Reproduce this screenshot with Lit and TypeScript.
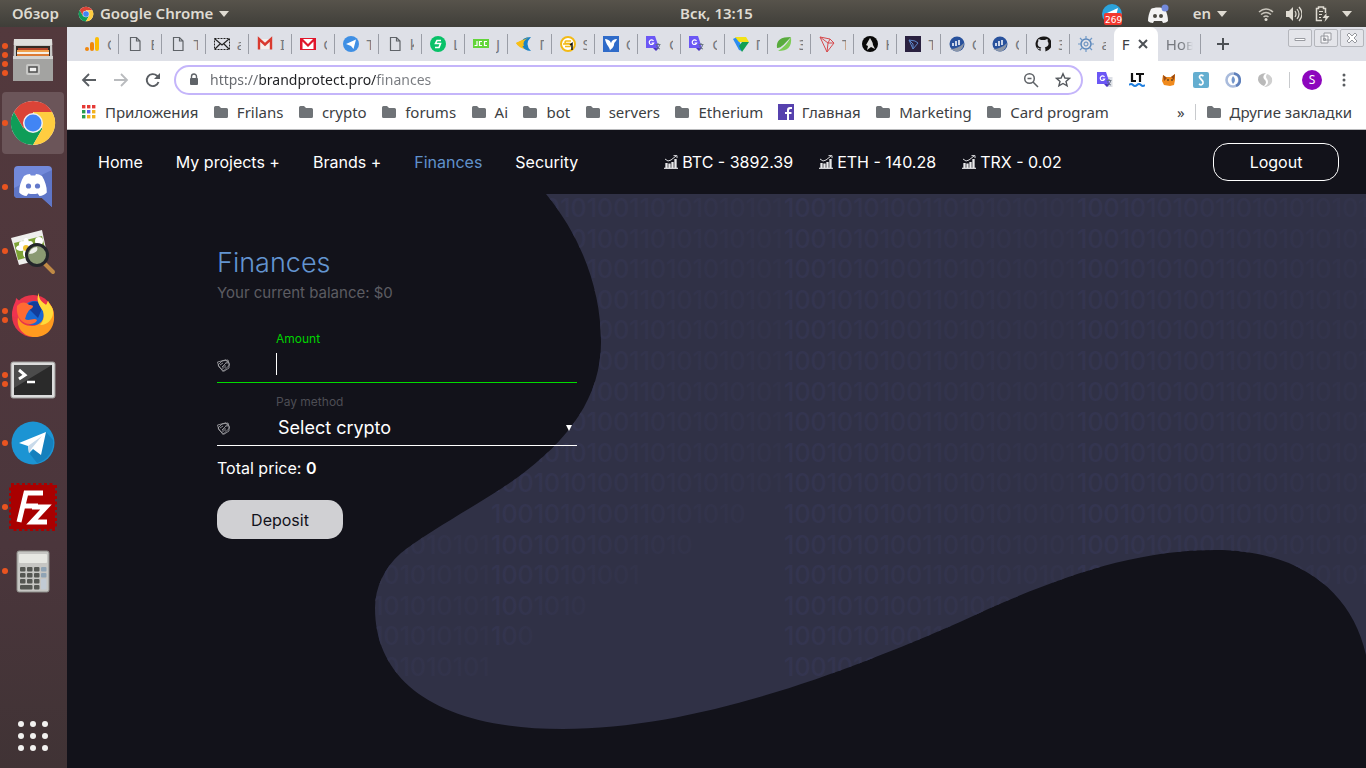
import { LitElement, html, svg, css } from "lit";
import { customElement, state } from "lit/decorators.js";
import { classMap } from "lit/directives/class-map.js";

type Glyph = unknown;

const chrome = svg`
  <circle cx="24" cy="24" r="22" fill="#fff"/>
  <path d="M24 24 4.9 13A22 22 0 0 1 43.1 13H24z" fill="#db4437"/>
  <path d="M4.9 13 14.5 29.5 24 24V13z" fill="#db4437"/>
  <path d="M24 24 14.5 29.5 4.9 13A22 22 0 0 0 24 46L33.5 29.5z" fill="#0f9d58"/>
  <path d="M43.1 13H24L33.5 29.5 24 46A22 22 0 0 0 43.1 13z" fill="#ffcd40"/>
  <circle cx="24" cy="24" r="10" fill="#f1f1f1"/>
  <circle cx="24" cy="24" r="8.500" fill="#4285f4"/>`;

const plane = svg`<path d="M10 24 37 13 32 36 24 30 20 34 19 27z" fill="#fff"/><path d="M19 27 33 17 23 29 20 34z" fill="#c8daea"/>`;

const discordFace = svg`<path d="M15 13c2-1.3 4-1.8 6-2l.8 1.4h4.4L27 11c2 .2 4 .7 6 2 3 5 5 10.500 4.800 16.500-2 2.200-4.600 3.300-7.300 3.500l-1.800-2.600c-3 .8-6.400.8-9.400 0L17.500 33c-2.700-.2-5.300-1.300-7.300-3.500C10 23.500 12 18 15 13z" fill="#fff"/>`;

const files = svg`
  <path d="M5 4h38l1 40H4z" fill="#c9c9c7"/><path d="M5 4h38l.3 6H4.700z" fill="#dededc"/>
  <path d="M7 11h34v13H7z" fill="#332a24"/><path d="M9 13h30v3H9z" fill="#b3442a"/>
  <path d="M8 15h32v3H8z" fill="#f0a04b"/><path d="M8 17h32v2H8z" fill="#f6efe4"/><path d="M8 19h32v2H8z" fill="#dc7a33"/>
  <path d="M4 21h40v25H4z" fill="#a3a3a1"/><path d="M4 21h40v3H4z" fill="#d4d4d2"/>
  <rect x="17" y="29" width="14" height="11" rx="2" fill="#c8c8c6"/><rect x="20" y="32" width="8" height="5" fill="#f1f1f0" stroke="#4c4c4c" stroke-width="1.500"/>`;

const imageViewer = svg`
  <path d="M2 11 33 3 39 31 10 38z" fill="#eeeeec"/><path d="M5 16 33 9 37 25 9 33z" fill="#7da336"/>
  <g fill="#fff"><ellipse cx="17" cy="16" rx="3" ry="5"/><ellipse cx="17" cy="26" rx="3" ry="5"/><ellipse cx="12" cy="21" rx="5" ry="3"/><ellipse cx="22" cy="21" rx="5" ry="3"/><circle cx="13" cy="17" r="3"/><circle cx="21" cy="17" r="3"/><circle cx="30" cy="14" r="4"/></g>
  <circle cx="17" cy="21" r="3" fill="#f0c330"/>
  <path d="M36 37 44 45" stroke="#c08a45" stroke-width="4" stroke-linecap="round"/>
  <circle cx="28" cy="28" r="10.500" fill="#8a9a72" stroke="#23262b" stroke-width="3"/>
  <path d="M20 27a8 8 0 0 1 8-7c2 4-3 7-8 7z" fill="#eef0ea"/>`;

const firefox = svg`
  <circle cx="24" cy="25" r="21" fill="#e8354a"/>
  <path d="M7 6c0 5 3 7 3 7L4 30l4-14z" fill="#f0334f"/><path d="M3 25C3 14 7 12 7 7c4 4 8 5 10 5h12v20z" fill="#ee3350"/>
  <circle cx="25" cy="22" r="12" fill="#1767d2"/><path d="M17 15c5-6 13-6 17 0l-5 12z" fill="#123d9b"/>
  <path d="M30 2c-4 8 2 14 4 18 3 8-3 15-11 15-7 0-12-3-14-9-2 10 5 20 17 20 13 0 20-10 19-22 0-7-4-10-6-14-1 2-1 3-2 4-4-3-8-6-7-12z" fill="#ff9a1f"/>
  <path d="M30 2c-4 8 2 14 4 18 2 6 0 11-3 14 9 0 14-8 13-14 0-4-4-7-5-10-1 2-1 3-2 4-4-3-8-6-7-12z" fill="#ffdb3a"/>
  <path d="M8 15c4-5 10-4 12-1 2 0 3 0 4 1 0 3-4 3-5 6-2 2-2 5-3 7 4 3 9-2 12 1-1 4-8 5-12 3-6-3-9-9-8-17z" fill="#ff6b32"/>`;

const terminal = svg`
  <rect x="2" y="7" width="44" height="36" rx="2" fill="#dcdcdc" stroke="#9a9a98"/>
  <rect x="5" y="10" width="38" height="30" fill="#2a2a2a"/><path d="M5 10h38L5 33z" fill="#4b4b4b"/>
  <path d="m10 15 6 5-6 4" stroke="#fff" stroke-width="3" fill="none"/><path d="M18 27h8" stroke="#fff" stroke-width="2.500"/>`;

const telegram = svg`<circle cx="24" cy="24" r="21.500" fill="#1c94d3"/><path d="M37 13 44 21A21 21 0 0 1 28 44L21 35z" fill="#1580bd"/>${plane}`;

const filezilla = svg`
  <rect x="2" y="2" width="44" height="44" fill="#a90000" stroke="#a90000" stroke-width="4" stroke-dasharray="3 2.500"/>
  <g fill="none" stroke="#fff" stroke-width="5"><path d="M10 39 17 10h17M14 23h15"/><path d="M23 24h14L23 39h15"/></g>`;

const calculator = svg`
  <rect x="8" y="4" width="32" height="41" rx="2" fill="#c6c6c3" stroke="#8c8c88"/>
  <rect x="10" y="7" width="28" height="9" rx="1" fill="#e6e7e2"/>
  ${[0, 1, 2].map((r) => [0, 1, 2].map((c) => svg`<rect x=${11 + c * 7} y=${20 + r * 6} width="5.500" height="4.500" rx="1" fill="#555753"/>`))}
  <rect x="11" y="38" width="12.500" height="4.500" rx="1" fill="#555753"/><rect x="25" y="38" width="5.500" height="4.500" rx="1" fill="#555753"/>
  <rect x="32" y="20" width="5.500" height="4.500" rx="1" fill="#8fa3b4"/><rect x="32" y="26" width="5.500" height="4.500" rx="1" fill="#8fa3b4"/><rect x="32" y="32" width="5.500" height="10.500" rx="1" fill="#c1cad4"/>`;

const discord = svg`<path d="M9 3h30q4 0 4 4v37l-10-9H9q-4 0-4-4V7q0-4 4-4z" fill="#7289da"/><path d="M5 25 43 7v37l-10-9H9q-4 0-4-4z" fill="#5f76c7"/>${discordFace}<circle cx="19.500" cy="23" r="2.600" fill="#6379cb"/><circle cx="28.500" cy="23" r="2.600" fill="#6379cb"/>`;

const dock: { name: string; art: Glyph; windows: number; active?: boolean }[] = [
  { name: "Files", art: files, windows: 4 },
  { name: "Google Chrome", art: chrome, windows: 1, active: true },
  { name: "Discord", art: discord, windows: 1 },
  { name: "Image Viewer", art: imageViewer, windows: 1 },
  { name: "Firefox", art: firefox, windows: 2 },
  { name: "Terminal", art: terminal, windows: 2 },
  { name: "Telegram", art: telegram, windows: 1 },
  { name: "FileZilla", art: filezilla, windows: 1 },
  { name: "Calculator", art: calculator, windows: 1 },
];

/* Favicons, all on a 16 x 16 grid */
const pageIcon = svg`<path d="M3.500 1.500h6l3.500 3.500v9.500h-9.500zM9.500 1.500V5H13" fill="none" stroke="#5f6368" stroke-width="1.200"/>`;
const analytics = svg`<rect x="11" y="1" width="4" height="14" rx="2" fill="#fbbc04"/><rect x="6" y="6" width="4" height="9" rx="2" fill="#f0860b"/><circle cx="3" cy="13" r="2" fill="#f0860b"/>`;
const envelope = svg`<path d="M.5 2.500h15v11H.500z" fill="none" stroke="#222" stroke-dasharray="2 1"/><path d="m1 3 7 6 7-6M1 13l5-5M15 13l-5-5" fill="none" stroke="#222" stroke-width="1.200"/>`;
const gmail = svg`<path d="M2 3h12v10H2z" fill="#f3f0ee"/><path d="M2 13.500V3l6 5.500L14 3v10.500" fill="none" stroke="#d93a2f" stroke-width="2.400"/>`;
const gmailRed = svg`<path d="M0 2h16v12H0z" fill="#e0162b"/><path d="m3 3 5 5 5-5zM2.500 13V5.500L8 11l5.500-5.500V13z" fill="#fff"/>`;
const tgBlue = svg`<circle cx="8" cy="8" r="8" fill="#3f8fe4"/><path d="m3 8 10-4.500L10.500 13 8 10z" fill="#fff"/>`;
const greenRound = svg`<circle cx="8" cy="8" r="8" fill="#08c168"/><path d="M11 4.500H7L5.500 7.500h5L9 11.500H5" fill="none" stroke="#fff" stroke-width="1.600"/>`;
const jcc = svg`<path d="M0 3h16v9H0z" fill="#62d53a"/><path d="M4 5v4.500H1.500M9 5.500H6.500v4H9M14 5.500h-2.500v4H14" fill="none" stroke="#fff" stroke-width="1.200"/>`;
const moon = svg`<path d="M0 7 12 1Q5 8 12 14 2 12 0 7z" fill="#f8bf16"/><path d="M15 1Q5 1 6 8t9 7Q8 8 15 1z" fill="#1b83c6"/><path d="M0 7 12 2Q6 5 8 10 2 10 0 7z" fill="#f8bf16"/>`;
const coin = svg`<circle cx="8" cy="8" r="7" fill="#fff" stroke="#f3ba16" stroke-width="2"/><path d="M11 5H6q-2 1 0 2.500h4q2 1.500 0 3H5M3 8h9" fill="none" stroke="#f3ba16" stroke-width="1.500"/><path d="m10 9 2-1.500V14" fill="none" stroke="#111" stroke-width="1.500"/>`;
const bird = svg`<path d="M0 0h16v16H0z" fill="#2f6bc9"/><path d="M2 3c2 0 5 1 6 4 1-3 3-4 6-4-1 3-3 3-3 6-1 4-4 4-4 6 0-4-4-6-5-12z" fill="#fff"/>`;
const translate = svg`<path d="M6 5h9.500v10H9z" fill="#dde0e6"/><path d="M0 0h9l4 12H0z" fill="#6b57f5"/><path d="m7 12h6l-3 3z" fill="#4a30c8"/><path d="M7.500 5a2.300 2.300 0 1 0 .2 2H5.500" fill="none" stroke="#fff" stroke-width="1.200"/><path d="M9.500 8.500h5M12 7v1.500M13.500 9c0 2-2 3.500-3.500 4M10.500 9.500c.5 2 2 3 3.500 3.500" fill="none" stroke="#5f6b7a" stroke-width=".9"/>`;
const triangles = svg`<path d="M0 3 4 1 8 9 9 15 6 14z" fill="#2c8df0"/><path d="M2 1h11l3 5H6z" fill="#f2e217"/><path d="m9 6 7 0-7 10-3-6z" fill="#13a052"/>`;
const leaf = svg`<path d="M15 1C5 1 0 4 1 12 6 12 9 7 15 1z" fill="#58ab3d"/><path d="M15 1c1 10-3 14-13 14 5-3 9-7 13-14z" fill="#7dcc56"/>`;
const tron = svg`<path d="m1 1 10 2 4 4-7 9zM1 1l8 6-1 9M9 7l2-4M9 7h6" fill="none" stroke="#d6494c" stroke-width="1"/>`;
const horse = svg`<circle cx="8" cy="8" r="8" fill="#090909"/><path d="M8 2c1 2 3 4 3 7l2 4-4-2-4 3 1-4-2-1z" fill="#dedede"/>`;
const tronDark = svg`<path d="M0 0h16v16H0z" fill="#2a2140"/><path d="m4 4 6 1 3 2-5 6zM4 4l4 4v5" fill="none" stroke="#5d86c9"/>`;
const globe = svg`<circle cx="8" cy="8" r="7.500" fill="#28519c"/><path d="M4 10V7M7 10V5M10 9V4" stroke="#fff" stroke-width="1.500"/><path d="M1 13c5 0 10-2 14-6-1 6-4 9-8 8.500z" fill="#8b96a8"/>`;
const github = svg`<path d="M8 .5a7.500 7.500 0 0 0-2.400 14.600v-2c-3 .6-3-1.500-3.300-1.700 2 0 1.500 1.600 3.500 1.200 0-.6.300-1 .5-1.200-3-.3-4-2-3.500-5 .1-.6.500-1 .6-1.200-.3-1 0-2 .2-2.200 1 0 2 .8 2.300 1h4.200c.3-.2 1.300-1 2.300-1 .2.200.5 1.200.2 2.200 1.600 2 1.400 5.500-2.800 6.200.4.400.6 1 .6 2v2A7.500 7.500 0 0 0 8 .5z" fill="#191717"/>`;
const cog = svg`<circle cx="8" cy="8" r="5" fill="none" stroke="#5c87bb" stroke-width="1.500"/><circle cx="8" cy="8" r="2" fill="none" stroke="#5c87bb"/><path d="M8 3V0M8 13v3M3 8H0M13 8h3M4.500 4.500 2 2M11.500 4.500 14 2M4.500 11.500 2 14M11.500 11.500 14 14" stroke="#7099c8" stroke-width="1.200"/>`;

const tabs: [Glyph, string][] = [
  [analytics, "O"], [pageIcon, "B"], [pageIcon, "T"], [envelope, "a"], [gmail, "I"], [gmailRed, "G"],
  [tgBlue, "T"], [pageIcon, "k"], [greenRound, "L"], [jcc, "J"], [moon, "Г"], [coin, "S"],
  [bird, "O"], [translate, "G"], [translate, "G"], [triangles, "П"], [leaf, "З"], [tron, "T"],
  [horse, "К"], [tronDark, "T"], [globe, "O"], [globe, "O"], [github, "З"], [cog, "a"],
];

const folder = svg`<path d="M1 3.500Q1 2 2.500 2H6l2 2h5.500Q15 4 15 5.500v7q0 1.500-1.500 1.500h-11Q1 14 1 12.500z" fill="#6f7377"/>`;
const facebook = svg`<path d="M0 0h16v16H0z" fill="#5641ae"/><path d="M9 16v-6H7V8h2V6q0-3 3-3h2v2h-1.500Q11 5 11 6.500V8h2.500v2H11v6z" fill="#fff"/>`;
const appsGrid = svg`${["#e53935", "#e53935", "#e53935", "#2a9d4f", "#5a5cf0", "#f2b21d", "#2a9d4f", "#f2b21d", "#f2b21d"].map(
  (c, i) => svg`<rect x=${1 + (i % 3) * 5} y=${1 + Math.floor(i / 3) * 5} width="3.400" height="3.400" fill=${c}/>`
)}`;

const bookmarks: [Glyph, string][] = [
  [appsGrid, "Приложения"], [folder, "Frilans"], [folder, "crypto"], [folder, "forums"], [folder, "Ai"], [folder, "bot"],
  [folder, "servers"], [folder, "Etherium"], [facebook, "Главная"], [folder, "Marketing"], [folder, "Card program"],
];

const extensions: [string, Glyph][] = [
  ["Translate", translate],
  ["LanguageTool", svg`<path d="M3 1v8h4M7 2h8M11 2v8" fill="none" stroke="#111" stroke-width="2.200"/><path d="M0 13q2-2 4 0t4 0 4 0 4 0" fill="none" stroke="#1f7fe0" stroke-width="2"/>`],
  ["MetaMask", svg`<path d="m2 3 3 2h5l4-3v6l-1 5-4 1-6-1-2-4z" fill="#f08a1d"/><path d="m2 3 4 3-3 3zM14 2l-4 3 3 3z" fill="#9a4a12"/><path d="M6 8h2M10 8h2" stroke="#222"/>`],
  ["Stylish", svg`<rect width="16" height="16" rx="2" fill="#64aed0"/><path d="M10.500 4Q7 2 6.500 5c0 2 4 3 3.500 6q-1 3-4 1" fill="none" stroke="#fff" stroke-width="1.800"/>`],
  ["Ring", svg`<circle cx="8" cy="8" r="6.500" fill="#fff" stroke="#a9bbdc" stroke-width="2.600"/><path d="M9 1.500a6.500 6.500 0 0 1 2 12.400" fill="none" stroke="#5f80bb" stroke-width="2.500"/><path d="M8 4q4 4 0 8-3-4 0-8z" fill="#7396cb"/>`],
  ["SimilarWeb", svg`<path d="M9 1Q0 2 1 8q1 4 6 6 4-4 0-7-2-3 2-6z" fill="#b9b9b9"/><path d="M10 2q6 2 5 8-2 5-8 5 6-3 3-8-2-2 0-5z" fill="#cfcfcf"/>`],
];

const rates = ["BTC - 3892.39", "ETH - 140.28", "TRX - 0.02"];

/* Backdrop digits: each row repeats the same block, and the second block thins out towards the bottom */
const binaryRow = "1001010100110101010101";
const binaryRows = Array.from({ length: 16 }, (_, r) => 217 + Math.round(r * 30.6));
const blocks = [198, 491, 784, 1077];
const digitsAt = (x: number, y: number) => {
  if (x === 198) return y > 530 ? binaryRow : "";
  if (x === 491 && y > 510) return binaryRow.slice(0, Math.max(0, 19 - Math.round((y - 523) / 30.6) * 4));
  if (x === 1077 && y > 590) return "";
  return binaryRow;
};

const icon = (art: Glyph, cls = "i16", box = 16) =>
  html`<svg class=${cls} viewBox="0 0 ${box} ${box}" aria-hidden="true">${art}</svg>`;

@customElement("desktop-bar")
class DesktopBar extends LitElement {
  static styles = css`
    :host { display: block; font: 600 15px/27px "Noto Sans", "Open Sans", sans-serif; color: #dfdbd2; background: linear-gradient(#57534b, #3f3e39); }
    .bar { display: grid; grid-template-columns: 67px 1fr auto 1fr; height: 27px; white-space: nowrap; }
    .left { grid-column: 1 / 3; display: flex; align-items: center; padding-left: 12px; }
    .app { display: flex; align-items: center; gap: 6px; margin-left: 19px; }
    .right { display: flex; align-items: center; justify-content: flex-end; padding-right: 14px; }
    .i16 { width: 16px; height: 16px; }
    .arrow { width: 10px; height: 6px; fill: #dfdbd2; }
    .tray { width: 22px; height: 24px; margin-right: 24px; }
    .lang { display: flex; align-items: center; gap: 6px; margin-right: 31px; }
    .status { display: flex; align-items: center; gap: 12px; }
    .small { font: 9px "DejaVu Sans", sans-serif; fill: #fff; }
  `;
  render() {
    const arrow = html`<svg class="arrow" viewBox="0 0 10 6" aria-hidden="true"><path d="M0 0h10L5 6z"/></svg>`;
    return html`<header class="bar">
      <div class="left"><span>Обзор</span><span class="app">${icon(chrome, "i16", 48)}<span>Google Chrome</span>${arrow}</span></div>
      <time>Вск, 13:15</time>
      <div class="right">
        <svg class="tray" viewBox="0 0 22 24"><circle cx="11" cy="12" r="10" fill="#2ba3dc"/><path d="m6 11 11-5-2 8z" fill="#fff"/><rect x="3" y="11" width="18" height="12" rx="2" fill="#f2392f"/><text class="small" x="4" y="21">269</text></svg>
        <svg class="tray" viewBox="0 0 22 24" aria-hidden="true"><path d="M4 7c3-2 11-2 14 0 2 4 3 8 3 12-1 1-3 2-5 2l-1-2H7l-1 2c-2 0-4-1-5-2 0-4 1-8 3-12z" fill="#f4f4f4"/><circle cx="8" cy="14" r="2" fill="#4a4842"/><circle cx="14" cy="14" r="2" fill="#4a4842"/><circle cx="18" cy="6" r="3.500" fill="#7289da"/></svg>
        <span class="lang"><span>en</span>${arrow}</span>
        <span class="status">
          ${icon(svg`<path d="M1 6q7-6 14 0M3 8.500q5-4 10 0M5.500 11q2.500-2 5 0" fill="none" stroke="#c9c5bc" stroke-width="1.600"/><circle cx="8" cy="13.500" r="1.500" fill="#dfdbd2"/>`)}
          ${icon(svg`<path d="M0 5h3l4-4v14l-4-4H0z" fill="#dfdbd2"/><path d="M9 5q2 3 0 6M11 3q4 5 0 10M13 1q6 7 0 14" fill="none" stroke="#dfdbd2" stroke-width="1.200"/>`)}
          ${icon(svg`<path d="M8 14.500H2.500v-12h2V1h5v1.500h2V7" fill="none" stroke="#dfdbd2" stroke-width="1.500"/><path d="M5 5.500h4M5 8.500h3M5 11.500h2" stroke="#dfdbd2"/><path d="m12.500 7-4 5h3l-1 4 5-6h-3z" fill="#dfdbd2"/>`)}
          ${arrow}
        </span>
      </div>
    </header>`;
  }
}

@customElement("desktop-dock")
class DesktopDock extends LitElement {
  static styles = css`
    :host { display: block; background: linear-gradient(#53393d, #4b363c 70%, #403335); }
    .dock { display: flex; flex-direction: column; gap: 2px; height: 100%; box-sizing: border-box; padding: 1px 2px; }
    .tile { display: grid; grid-template-columns: 5px 1fr 5px; align-items: center; width: 62px; height: 62px; padding: 0; border: 0; border-radius: 4px; background: none; }
    .active { background: #6b5559; }
    .dots { display: grid; gap: 3px; }
    .dot { width: 6px; height: 6px; border-radius: 50%; background: #e95420; }
    .art { width: 48px; height: 48px; justify-self: center; }
    .all { margin-top: auto; }
    .grid { grid-column: 1 / 4; width: 48px; height: 48px; justify-self: center; fill: #f2f1f0; }
  `;
  render() {
    return html`<nav class="dock" aria-label="Dock">
      ${dock.map((d) => html`<button class=${classMap({ tile: true, active: !!d.active })} aria-label=${d.name}>
        <span class="dots">${Array.from({ length: d.windows }, () => html`<span class="dot"></span>`)}</span>${icon(d.art, "art", 48)}
      </button>`)}
      <button class="tile all" aria-label="Show applications">
        <svg class="grid" viewBox="0 0 48 48">${[12, 24, 36].map((y) => [12, 24, 36].map((x) => svg`<circle cx=${x} cy=${y} r="3"/>`))}</svg>
      </button>
    </nav>`;
  }
}

@customElement("browser-chrome")
class BrowserChrome extends LitElement {
  static styles = css`
    :host { display: block; font: 15px/20px "Noto Sans", "Open Sans", sans-serif; color: #3c4043; background: #fff; }
    button { padding: 0; border: 0; background: none; color: inherit; font: inherit; display: grid; place-items: center; }
    .i16 { width: 16px; height: 16px; flex: none; }
    .strip { display: flex; height: 34px; padding-left: 9px; background: #dee0e7; }
    .tabs { display: flex; flex: 1; min-width: 0; }
    .tab { display: flex; flex: 1 1 0; min-width: 0; align-items: center; gap: 7px; height: 20px; margin-top: 7px; padding: 0 7px 0 8px; box-sizing: border-box; border-right: 1px solid #9a9da6; white-space: nowrap; }
    .last { border-right-color: transparent; }
    .label { flex: 1; min-width: 0; overflow: hidden; color: #76797f; }
    .fade { mask-image: linear-gradient(90deg, #000 60%, transparent); }
    .current { display: flex; flex: 1 1 0; align-items: center; justify-content: space-between; padding: 0 9px 0 8px; box-sizing: border-box; background: #fff; border-radius: 8px 8px 0 0; }
    .close, .plus { width: 12px; height: 12px; fill: none; stroke: #4c5055; stroke-width: 2; }
    .tools { display: flex; flex: none; justify-content: space-between; width: 165px; box-sizing: border-box; padding: 0 2px 0 16px; }
    .wins { display: flex; gap: 2px; margin-top: 2px; }
    .win { width: 24px; height: 18px; border: 1px solid #b4b6bc; border-radius: 2px; background: #e4e5ea; }
    .bar { display: flex; align-items: center; height: 38px; padding: 0 14px; }
    .nav { display: flex; gap: 16px; margin-right: 13px; }
    .omni { display: flex; flex: 1; align-items: center; box-sizing: border-box; height: 30px; padding: 0 10px; border: 2px solid #c4b5fa; border-radius: 15px; }
    .url { flex: 1; min-width: 0; margin: 0 16px 0 8px; padding: 0; border: 0; outline: 0; font: 14px/20px "Noto Sans", "Open Sans", sans-serif; color: transparent; background: linear-gradient(90deg, #65686d 50px, #1f2023 50px 166px, #777a7f 166px); background-clip: text; -webkit-background-clip: text; }
    .star { margin-left: 16px; }
    .exts { display: flex; gap: 16px; margin-left: 14px; }
    .rule { width: 1px; height: 16px; background: #c8cacd; }
    .avatar { width: 20px; height: 20px; margin: 0 14px 0 12px; border-radius: 50%; background: #8d06bd; color: #fff; font-size: 12px; line-height: 20px; }
    .dots { width: 16px; height: 16px; fill: #5a5d61; }
    .marks { display: flex; align-items: center; height: 31px; padding: 0 14px 5px 14px; box-sizing: border-box; border-bottom: 1px solid #b9babc; white-space: nowrap; }
    .list { display: flex; flex: 1; justify-content: space-between; margin-right: 68px; }
    .mark { display: flex; align-items: center; gap: 8px; color: inherit; text-decoration: none; }
    .more { margin-right: 10px; }
    .other { margin-left: 10px; }
  `;
  render() {
    return html`
      <div class="strip">
        <div class="tabs">
          ${tabs.map(([art, label], i) => html`<div class=${classMap({ tab: true, last: i === tabs.length - 1 })}>${icon(art)}<span class="label">${label}</span></div>`)}
          <div class="current"><span>F</span><button aria-label="Close tab"><svg class="close" viewBox="0 0 12 12"><path d="m2 2 8 8M10 2l-8 8"/></svg></button></div>
          <div class="tab"><span class="label fade">Нов</span></div>
        </div>
        <div class="tools">
          <button aria-label="New tab"><svg class="plus" viewBox="0 0 12 12"><path d="M6 0v12M0 6h12"/></svg></button>
          <div class="wins">
            <button class="win" aria-label="Minimize">${icon(svg`<path d="M3 8.500h10v2H3z" fill="#fff" stroke="#9a9ca2"/>`)}</button>
            <button class="win" aria-label="Restore">${icon(svg`<path d="M6 3h7v7H6zM3 6h7v7H3z" fill="#f5f5f7" stroke="#96989e"/><path d="M5.500 8.500h2v2h-2z" fill="none" stroke="#96989e"/>`)}</button>
            <button class="win" aria-label="Close">${icon(svg`<path d="m3 5 2-2 3 3 3-3 2 2-3 3 3 3-2 2-3-3-3 3-2-2 3-3z" fill="#fff" stroke="#96989e"/>`)}</button>
          </div>
        </div>
      </div>
      <div class="bar">
        <div class="nav">
          <button aria-label="Back">${icon(svg`<path d="M15 8H2M8 2 2 8l6 6" fill="none" stroke="#5a5e63" stroke-width="1.800"/>`)}</button>
          <button aria-label="Forward">${icon(svg`<path d="M1 8h13M8 2l6 6-6 6" fill="none" stroke="#b9bbbe" stroke-width="1.800"/>`)}</button>
          <button aria-label="Reload">${icon(svg`<path d="M13.500 10A6 6 0 1 1 12 3.800l2 2" fill="none" stroke="#5a5e63" stroke-width="1.900"/><path d="M15 1v6H9z" fill="#5a5e63"/>`)}</button>
        </div>
        <div class="omni">
          <svg class="i16" viewBox="0 0 16 16" aria-hidden="true"><path d="M5 6h6q1 0 1 1v5q0 1-1 1H5q-1 0-1-1V7q0-1 1-1z" fill="#5f6368"/><path d="M5.500 7V4.500a2.500 2.500 0 0 1 5 0V7" fill="none" stroke="#5f6368" stroke-width="1.400"/></svg>
          <input class="url" aria-label="Address" value="https://brandprotect.pro/finances" spellcheck="false">
          <button aria-label="Zoom">${icon(svg`<circle cx="6.500" cy="6.500" r="4.800" fill="none" stroke="#5f6368" stroke-width="1.500"/><path d="m10 10 5 5M4.500 6.500h4" stroke="#5f6368" stroke-width="1.500"/>`)}</button>
          <button class="star" aria-label="Bookmark">${icon(svg`<path d="m8 1.800 1.900 4.200 4.600.4-3.500 3 1.100 4.500L8 11.500l-4.100 2.400L5 9.400l-3.500-3 4.600-.4z" fill="none" stroke="#54585d" stroke-width="1.400"/>`)}</button>
        </div>
        <div class="exts">${extensions.map(([name, art]) => html`<button aria-label=${name}>${icon(art)}</button>`)}<span class="rule"></span></div>
        <button class="avatar" aria-label="Profile">S</button>
        <button aria-label="Menu"><svg class="dots" viewBox="0 0 16 16"><circle cx="8" cy="3" r="1.500"/><circle cx="8" cy="8" r="1.500"/><circle cx="8" cy="13" r="1.500"/></svg></button>
      </div>
      <div class="marks">
        <nav class="list" aria-label="Bookmarks">${bookmarks.map(([art, label]) => html`<a class="mark" href="#">${icon(art)}${label}</a>`)}</nav>
        <button class="more" aria-label="More bookmarks">»</button><span class="rule"></span>
        <a class="mark other" href="#">${icon(folder)}Другие закладки</a>
      </div>`;
  }
}

@customElement("finance-page")
class FinancePage extends LitElement {
  static styles = css`
    :host { display: flex; flex-direction: column; font: 16px/24px Inter, Roboto, sans-serif; color: #fff; background: #12121a; }
    .top { display: flex; align-items: center; height: 64px; padding: 0 27px 0 31px; white-space: nowrap; }
    .menu { display: flex; gap: 33px; }
    .link { color: #fff; text-decoration: none; }
    .here { color: #6091cb; }
    .rates { display: flex; gap: 26px; margin-left: 86px; }
    .rate { display: flex; align-items: center; gap: 4px; }
    .chart { width: 14px; height: 14px; }
    .pill { width: 126px; height: 38px; box-sizing: border-box; padding: 0; border: 1px solid #fff; border-radius: 15px; background: none; color: #fff; font: inherit; }
    .logout { margin-left: auto; }
    .body { display: grid; flex: 1; min-height: 0; }
    .art { grid-area: 1 / 1; width: 100%; height: 100%; min-height: 0; }
    .digits { font: 500 25px Inter, Roboto, sans-serif; }
    .form { grid-area: 1 / 1; justify-self: start; width: 360px; margin: 0 0 0 150px; padding-top: 52px; }
    .title { margin: 0; font-weight: 300; font-size: 27px; line-height: 34px; color: #6394d0; }
    .balance { margin: 0 0 14px; font-size: 15px; line-height: 26px; color: #5c5c62; }
    .field { display: grid; grid-template: 28px 34px / 59px 1fr; align-items: center; border-bottom: 1px solid #fff; }
    .on { border-bottom-color: #00dc00; }
    .caption { grid-column: 2; font-size: 12px; line-height: 14px; padding-top: 10px; color: #4d4d54; }
    .on .caption { color: #00d200; }
    .tag { width: 13px; height: 13px; }
    .amount, .pay { grid-area: 2 / 2; width: 100%; height: 34px; box-sizing: border-box; padding: 0; border: 0; outline: 0; color: #fff; font: 18px/24px Inter, Roboto, sans-serif; background: none; appearance: none; }
    .amount { background: linear-gradient(#fff, #fff) 0 5px / 1px 22px no-repeat; }
    .pay { padding: 0 2px; }
    .caret { grid-area: 2 / 2; justify-self: end; width: 6px; height: 6px; margin-right: 5px; fill: #fff; pointer-events: none; }
    .total { margin: 10px 0 20px; }
    .sum { font-weight: 600; }
    .deposit { display: block; border: 0; background: #d0d0d3; color: #12121a; height: 39px; }
  `;
  @state() amount = "";
  render() {
    const tag = html`<svg class="tag" viewBox="0 0 13 13" aria-hidden="true" fill="none" stroke="#a9a9ad" stroke-width=".8"><path d="M1 6 5 2l6-1 1.500 5L6 12.500z"/><path d="M.5 3 9 .8l3 3.200v5l-5 3.200L2 8zM3 6l3-2M5 8l4-4M6 7v3M8 6v3"/><circle cx="10" cy="3.500" r=".8"/></svg>`;
    return html`
      <header class="top">
        <nav class="menu" aria-label="Main">
          ${["Home", "My projects +", "Brands +", "Finances", "Security"].map((t) => html`<a class=${classMap({ link: true, here: t === "Finances" })} href="#">${t}</a>`)}
        </nav>
        <div class="rates">${rates.map((r) => html`<span class="rate"><svg class="chart" viewBox="0 0 14 14" aria-hidden="true"><path d="M0 13.300h14" stroke="#e8e8ea" stroke-width="1.200"/><path d="M2.500 13V8M5.500 13V8.500M8.500 13V7M11.500 13V4" stroke="#e8e8ea" stroke-width="2.300" fill="none"/><path d="m1 4 3 2 3-1 5-4M9.500 .600H13v2.500" stroke="#d8d8da" fill="none"/></svg>${r}</span>`)}</div>
        <button class="pill logout">Logout</button>
      </header>
      <main class="body">
        <svg class="art" viewBox="67 194 1299 574" preserveAspectRatio="none" aria-hidden="true">
          <defs>
            <linearGradient id="ink" x1="0" y1="0" x2="1" y2="0"><stop offset="0" stop-color="#343550"/><stop offset="1" stop-color="#32334a"/></linearGradient>
            <clipPath id="wave"><path d="M546 194C582 238 601 290 601 342C601 396 570 440 514 480C473 508 430 530 401 553C384 568 375 588 375 608C375 683 440 729 563 729C700 729 850 670 960 622C1050 580 1130 550 1215 550C1300 550 1352 592 1366 655V194z"/></clipPath>
          </defs>
          <g clip-path="url(#wave)">
            <path d="M67 194h1299v574H67z" fill="#303146"/>
            <g class="digits" fill="url(#ink)">${binaryRows.map((y) => blocks.map((x) => (digitsAt(x, y) ? svg`<text x=${x} y=${y}>${digitsAt(x, y)}</text>` : "")))}</g>
          </g>
        </svg>
        <form class="form">
          <h1 class="title">Finances</h1>
          <p class="balance">Your current balance: $0</p>
          <div class="field on">
            <label class="caption" for="amount">Amount</label>
            ${tag}<input class="amount" id="amount" inputmode="decimal" autocomplete="off" .value=${this.amount} @input=${(e: Event) => (this.amount = (e.target as HTMLInputElement).value)}>
          </div>
          <div class="field">
            <label class="caption" for="pay">Pay method</label>
            ${tag}<select class="pay" id="pay"><option>Select crypto</option></select>
            <svg class="caret" viewBox="0 0 6 6" aria-hidden="true"><path d="M0 0h6L3 6z"/></svg>
          </div>
          <p class="total">Total price: <span class="sum">0</span></p>
          <button class="pill deposit" type="button">Deposit</button>
        </form>
      </main>`;
  }
}

@customElement("app-root")
class AppRoot extends LitElement {
  static styles = css`
    :host { display: grid; grid-template: auto auto 1fr / 67px 1fr; min-height: 100vh; background: #12121a; }
    .system { grid-column: 1 / 3; }
    .dock { grid-row: 2 / 4; }
    .page { min-width: 0; }
    .browser { min-width: 0; }
  `;
  render() {
    return html`
      <desktop-bar class="system"></desktop-bar>
      <desktop-dock class="dock"></desktop-dock>
      <browser-chrome class="browser"></browser-chrome>
      <finance-page class="page"></finance-page>`;
  }
}
